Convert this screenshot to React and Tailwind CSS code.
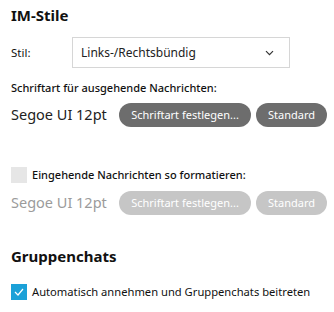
import React from "react";

const font = { fontFamily: '"Noto Sans", "Open Sans", sans-serif' };

function Chevron() {
  return (
    <svg width="9" height="6" viewBox="0 0 9 6" fill="none">
      <path d="M1 1.2l3.5 3.5 3.5-3.5" stroke="#333" strokeWidth="1.2" />
    </svg>
  );
}

export default function App() {
  return (
    <div className="w-[334px] h-[312px] bg-white text-[#111] overflow-hidden pl-[11px] pt-[5px]" style={font}>
      <div className="text-[15px] font-bold leading-[20px]">IM-Stile</div>
      <div className="flex items-center mt-[12px] h-[31px]">
        <div className="w-[61px] text-[11.5px]">Stil:</div>
        <div className="w-[218px] h-[31px] border border-[#d6d6d6] flex items-center justify-between pl-[8px] pr-[15px] text-[12px] text-[#222]">
          <span>Links-/Rechtsbündig</span>
          <Chevron />
        </div>
      </div>
      <div className="mt-[12px] text-[11px] font-medium leading-[16px]">Schriftart für ausgehende Nachrichten:</div>
      <div className="flex items-center mt-[7px] h-[24px]">
        <div className="w-[108px] text-[14.5px] text-[#222]">Segoe UI 12pt</div>
        <div className="h-[24px] w-[132px] rounded-full bg-[#6d6d6d] text-white text-[11px] flex items-center justify-center">Schriftart festlegen...</div>
        <div className="h-[24px] w-[71px] ml-[5px] rounded-full bg-[#6d6d6d] text-white text-[11px] flex items-center justify-center">Standard</div>
      </div>
      <div className="flex items-center mt-[40px] h-[16px]">
        <div className="w-[16px] h-[16px] bg-[#e6e6e6]"></div>
        <div className="ml-[5px] text-[11px] font-medium">Eingehende Nachrichten so formatieren:</div>
      </div>
      <div className="flex items-center mt-[8px] h-[24px]">
        <div className="w-[108px] text-[14.5px] text-[#9b9b9b]">Segoe UI 12pt</div>
        <div className="h-[24px] w-[132px] rounded-full bg-[#c6c6c6] text-white text-[11px] flex items-center justify-center">Schriftart festlegen...</div>
        <div className="h-[24px] w-[71px] ml-[5px] rounded-full bg-[#c6c6c6] text-white text-[11px] flex items-center justify-center">Standard</div>
      </div>
      <div className="mt-[31px] text-[15px] font-bold leading-[20px]">Gruppenchats</div>
      <div className="flex items-center mt-[18px] h-[16px]">
        <div className="w-[16px] h-[16px] bg-[#1ba1d8] flex items-center justify-center">
          <svg width="10" height="8" viewBox="0 0 10 8" fill="none">
            <path d="M1 4l3 3 5-6" stroke="white" strokeWidth="1.2" />
          </svg>
        </div>
        <div className="ml-[5px] text-[11.2px]">Automatisch annehmen und Gruppenchats beitreten</div>
      </div>
    </div>
  );
}
